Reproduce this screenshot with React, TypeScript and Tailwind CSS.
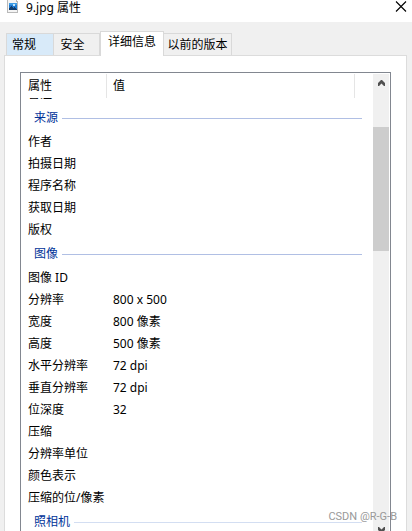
import { FC } from "react";
import clsx from "clsx";

type Property = {
    name: string
    value?: string
}

type Group = {
    title: string
    faded?: boolean
    items: Property[]
}

const tabs = ["常规", "安全", "详细信息", "以前的版本"]

const groups: Group[] = [
    {
        title: "来源",
        items: [
            { name: "作者" },
            { name: "拍摄日期" },
            { name: "程序名称" },
            { name: "获取日期" },
            { name: "版权" },
        ],
    },
    {
        title: "图像",
        items: [
            { name: "图像 ID" },
            { name: "分辨率", value: "800 x 500" },
            { name: "宽度", value: "800 像素" },
            { name: "高度", value: "500 像素" },
            { name: "水平分辨率", value: "72 dpi" },
            { name: "垂直分辨率", value: "72 dpi" },
            { name: "位深度", value: "32" },
            { name: "压缩" },
            { name: "分辨率单位" },
            { name: "颜色表示" },
            { name: "压缩的位/像素" },
        ],
    },
    { title: "照相机", faded: true, items: [] },
]

const FileIcon: FC = () => (
    <svg width="12" height="14" viewBox="0 0 12 14" shapeRendering="crispEdges">
        <path d="M0.5 -1V12.5H10.5V2L8 -1Z" fill="#f4f4f4" stroke="#b9b9b9" />
        <path d="M2 3H10V10H2Z" fill="#1d78cf" />
        <path d="M2 3H10V5H2Z" fill="#3f9be4" />
        <path d="M2 8L4 6L6 8L7 7L10 9V10H2Z" fill="#123c6b" />
        <path d="M6 4H8V6H6Z" fill="#c4e6fb" />
    </svg>
)

const Chevron: FC<{ down?: boolean }> = ({ down }) => (
    <svg width="9" height="7" viewBox="0 0 9 7" className={down ? "rotate-180" : ""}>
        <path d="M4 0H5L8 3V6H7L4.5 3.5L2 6H1V3Z" fill="#505050" />
    </svg>
)

const GroupRow: FC<{ group: Group }> = ({ group }) => (
    <tr>
        <th colSpan={3} className="h-[26px] p-0 font-normal text-[#003399]">
            <div className="flex items-center gap-1 pl-[13px] pr-[11px]">
                <span>{group.title}</span>
                <span className={clsx("h-px flex-1", group.faded ? "bg-[#d3def2]" : "bg-[#b0bfe4]")} />
            </div>
        </th>
    </tr>
)

const PropertyTable: FC = () => (
    <table className="w-full table-fixed border-collapse text-left">
        <colgroup>
            <col className="w-[86px]" />
            <col />
            <col className="w-[18px]" />
        </colgroup>
        <thead>
            <tr>
                <th className="h-[25px] p-0 font-normal">
                    <div className="mt-px h-6 border-r border-[#e5e5e5] pl-[7px] leading-6">属性</div>
                </th>
                <th className="p-0 font-normal">
                    <div className="mt-px h-6 border-r border-[#e5e5e5] pl-[6px] leading-6">值</div>
                </th>
                <td className="p-0" />
            </tr>
        </thead>
        <tbody>
            {/* row scrolled mostly under the header */}
            <tr>
                <td colSpan={3} className="h-[7px] p-0">
                    <div className="flex h-[7px] items-end overflow-hidden pl-[7px]">
                        <span className="leading-[22px]">备注</span>
                    </div>
                </td>
            </tr>
        </tbody>
        {groups.map((group) => (
            <tbody key={group.title}>
                <GroupRow group={group} />
                {group.items.map((item) => (
                    <tr key={item.name}>
                        <td className="h-[22px] whitespace-nowrap p-0 pl-[7px]">{item.name}</td>
                        <td className="p-0 pl-[6px]">{item.value}</td>
                        <td className="p-0" />
                    </tr>
                ))}
            </tbody>
        ))}
    </table>
)

const ScrollBar: FC = () => (
    <div className="mt-px mr-px flex w-4 flex-col items-center bg-[#f0f0f0]">
        <div className="flex h-[53px] items-start pt-[6px]">
            <Chevron />
        </div>
        <div className="h-[124px] w-full bg-[#cdcdcd]" />
        <div className="mt-auto pb-[6px]">
            <Chevron down />
        </div>
    </div>
)

export default function App() {
    return (
        <div className="relative flex h-screen flex-col overflow-hidden bg-[#f0f0f0] font-['Noto_Sans','Noto_Sans_CJK_SC',sans-serif] text-[12px] leading-4 text-black">
            <header className="flex h-[22px] shrink-0 items-start bg-white pl-[7px] pr-[5px]">
                <FileIcon />
                <h1 className="flex-1 pl-[7px]">9.jpg 属性</h1>
                <button type="button" aria-label="关闭" className="pt-px">
                    <svg width="12" height="11" viewBox="0 0 12 11">
                        <path d="M1 0.5L11 10.5M11 0.5L1 10.5" stroke="#000" strokeWidth="1.1" />
                    </svg>
                </button>
            </header>
            <nav role="tablist" className="flex h-[33px] shrink-0 items-end pl-[6px]">
                {tabs.map((tab, index) => (
                    <button
                        key={tab}
                        type="button"
                        role="tab"
                        aria-selected={index === 2}
                        className={clsx(
                            "border-t border-r border-[#d9d9d9] whitespace-nowrap",
                            index === 0 && "h-[22px] w-12 border-l bg-[#d8eaf9] pr-3",
                            index === 1 && "h-[22px] w-[46px] pr-2",
                            index === 2 && "z-10 -mb-px h-[25px] w-16 border-l bg-white pb-1",
                            index === 3 && "h-[22px] w-[68px]"
                        )}
                    >
                        {tab}
                    </button>
                ))}
            </nav>
            <main className="ml-1 mr-[5px] flex-1 border-t border-x border-[#dcdcdc] bg-white px-[15px] pt-4">
                <div className="flex border border-[#828790]">
                    <div className="min-w-0 flex-1 pb-1">
                        <PropertyTable />
                    </div>
                    <ScrollBar />
                </div>
            </main>
            <span className="absolute right-[15px] bottom-[6px] font-['Roboto',sans-serif] text-[11px] text-[#999]">
                CSDN @R-G-B
            </span>
        </div>
    )
}
